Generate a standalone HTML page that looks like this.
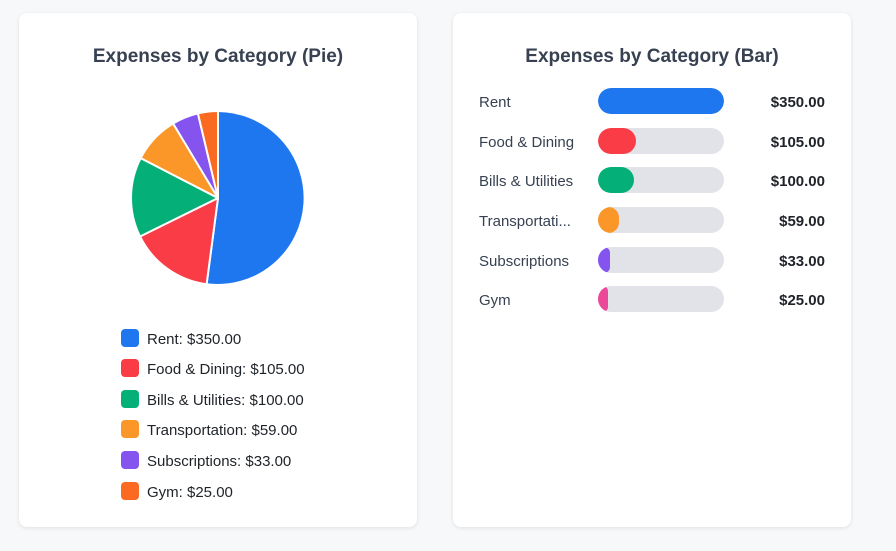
<!DOCTYPE html>
<html><head><meta charset="utf-8"><style>
*{margin:0;padding:0;box-sizing:border-box}
body{width:896px;height:551px;background:#f7f8fa;font-family:"Liberation Sans",Arial,sans-serif;position:relative;overflow:hidden}
.card{position:absolute;top:13px;width:398px;height:514px;background:#fff;border-radius:8px;box-shadow:0 1px 4px rgba(0,0,0,.10)}
.title{position:absolute;top:33px;width:100%;text-align:center;font-size:19px;font-weight:bold;color:#374151}
.leg{position:absolute;left:102px;font-size:15px;color:#1f2328;height:18px;line-height:18px}
.leg i{position:absolute;left:0;top:0;width:18px;height:18px;border-radius:4px}
.leg span{position:absolute;left:26px;top:2px;white-space:nowrap}
.row{position:absolute;left:0;width:100%;height:26px}
.lab{position:absolute;left:26px;top:6px;font-size:15px;color:#374151;line-height:18px}
.trk{position:absolute;left:145px;top:0;width:126px;height:26px;border-radius:13px;background:#e2e3e8;overflow:hidden}
.trk b{display:block;height:26px;border-radius:13px}
.val{position:absolute;right:26px;top:6px;font-size:15px;font-weight:bold;color:#1f2328;line-height:18px}
</style></head><body>
<div class="card" style="left:19px">
<div class="title">Expenses by Category (Pie)</div>
<svg style="position:absolute;left:-19px;top:-13px" width="420" height="320">
<g stroke="#fff" stroke-width="2" stroke-linejoin="round">
<path d="M218,198 L218,111 A87,87 0 1 1 206.6,284.3 Z" fill="#1f77f0"/>
<path d="M218,198 L206.6,284.3 A87,87 0 0 1 140,236.5 Z" fill="#f93c46"/>
<path d="M218,198 L140,236.5 A87,87 0 0 1 140.7,158.1 Z" fill="#04b077"/>
<path d="M218,198 L140.7,158.1 A87,87 0 0 1 173.1,123.5 Z" fill="#fb9628"/>
<path d="M218,198 L173.1,123.5 A87,87 0 0 1 197.9,113.4 Z" fill="#8553ee"/>
<path d="M218,198 L197.9,113.4 A87,87 0 0 1 218,111 Z" fill="#fb6a21"/>
</g></svg>
<div class="leg" style="top:316px"><i style="background:#1f77f0"></i><span>Rent: $350.00</span></div>
<div class="leg" style="top:346px"><i style="background:#f93c46"></i><span>Food &amp; Dining: $105.00</span></div>
<div class="leg" style="top:377px"><i style="background:#04b077"></i><span>Bills &amp; Utilities: $100.00</span></div>
<div class="leg" style="top:407px"><i style="background:#fb9628"></i><span>Transportation: $59.00</span></div>
<div class="leg" style="top:438px"><i style="background:#8553ee"></i><span>Subscriptions: $33.00</span></div>
<div class="leg" style="top:469px"><i style="background:#fb6a21"></i><span>Gym: $25.00</span></div>
</div>
<div class="card" style="left:453px">
<div class="title">Expenses by Category (Bar)</div>
<div class="row" style="top:75px"><div class="lab">Rent</div><div class="trk"><b style="width:126px;background:#1f77f0"></b></div><div class="val">$350.00</div></div>
<div class="row" style="top:115px"><div class="lab">Food &amp; Dining</div><div class="trk"><b style="width:38px;background:#f93c46"></b></div><div class="val">$105.00</div></div>
<div class="row" style="top:154px"><div class="lab">Bills &amp; Utilities</div><div class="trk"><b style="width:36px;background:#04b077"></b></div><div class="val">$100.00</div></div>
<div class="row" style="top:194px"><div class="lab">Transportati...</div><div class="trk"><b style="width:21px;background:#fb9628"></b></div><div class="val">$59.00</div></div>
<div class="row" style="top:234px"><div class="lab">Subscriptions</div><div class="trk"><b style="width:12px;background:#8553ee"></b></div><div class="val">$33.00</div></div>
<div class="row" style="top:273px"><div class="lab">Gym</div><div class="trk"><b style="width:10px;background:#ec4899"></b></div><div class="val">$25.00</div></div>
</div>
</body></html>
